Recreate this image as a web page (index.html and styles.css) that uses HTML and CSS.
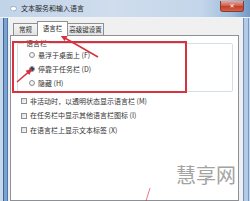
FILE: index.html
```html
<!DOCTYPE html>
<html lang="zh">
<head>
<meta charset="utf-8">
<link rel="stylesheet" href="styles.css">
</head>
<body>
<div class="window">
  <div class="titlebar">
    <svg class="app-icon" width="7" height="6" viewBox="0 0 7 6"><ellipse cx="3.5" cy="2.6" rx="3" ry="2.2" fill="#fff" stroke="#6f8fb5" stroke-width="0.6"/><path d="M2 4.4 L1.6 5.8 L3.4 4.6 Z" fill="#fff"/></svg>
    <span class="title">文本服务和输入语言</span>
    <div class="close">✕</div>
  </div>
  <div class="frame-body">
    <div class="frame-left"></div>
    <div class="client">
      <div class="tabs">
        <div class="tab tab-general">常规</div>
        <div class="tab tab-bar active">语言栏</div>
        <div class="tab tab-adv">高级键设置</div>
      </div>
      <div class="panel">
        <div class="group">
          <div class="legend">语言栏</div>
          <div class="row radio-row"><span class="radio"></span><span>悬浮于桌面上 (F)</span></div>
          <div class="row radio-row"><span class="radio checked"></span><span>停靠于任务栏 (D)</span></div>
          <div class="row radio-row"><span class="radio"></span><span>隐藏 (H)</span></div>
        </div>
        <div class="checks">
          <div class="row check-row"><span class="check"></span><span>非活动时，以透明状态显示语言栏 (M)</span></div>
          <div class="row check-row"><span class="check"></span><span>在任务栏中显示其他语言栏图标 (I)</span></div>
          <div class="row check-row"><span class="check"></span><span>在语言栏上显示文本标签 (X)</span></div>
        </div>
      </div>
    </div>
    <div class="frame-right"></div>
  </div>
  <div class="highlight"></div>
  <svg class="arrows" width="250" height="201" viewBox="0 0 250 201">
    <line x1="98" y1="57" x2="64" y2="37.5" stroke="#d8303c" stroke-width="1.5"/>
    <polygon points="60,35 67.6,36.1 64.6,41" fill="#d8303c"/>
    <line x1="17" y1="82" x2="29" y2="71.6" stroke="#d8303c" stroke-width="1.4"/>
    <polygon points="32.5,68.5 29.3,75 25.6,70.8" fill="#d8303c"/>
    <line x1="150" y1="188" x2="146" y2="201" stroke="#d8303c" stroke-width="0.9" opacity="0.7"/>
  </svg>
  <div class="watermark">慧享网</div>
</div>
</body>
</html>
```
FILE: styles.css
```css
* { box-sizing: border-box; }
html, body { margin: 0; padding: 0; }
body {
  width: 250px;
  height: 201px;
  overflow: hidden;
  font-family: "Noto Sans CJK SC", "Noto Sans", sans-serif;
  color: #333;
  background: #fff;
}
.window {
  position: relative;
  width: 250px;
  height: 201px;
  display: flex;
  flex-direction: column;
  overflow: hidden;
}
.titlebar {
  height: 18px;
  display: flex;
  align-items: center;
  padding-left: 10px;
  background: linear-gradient(to right, #c2d4e8 0%, #cfdded 45%, #c4d6ea 80%, #a3bfdd 92%, #7199c6 100%);
  border-bottom: 1px solid #eef3f9;
}
.app-icon { flex: none; margin-right: 4px; }
.title {
  font-size: 7px;
  line-height: 7px;
  color: #262626;
}
.close {
  margin-left: auto;
  margin-right: 6px;
  align-self: flex-start;
  margin-top: 1px;
  width: 24px;
  height: 11px;
  border: 1px solid #8a3b31;
  border-top: none;
  border-radius: 0 0 3px 3px;
  background: linear-gradient(#e9a797, #d0634f 45%, #c2402c 55%, #d2634c);
  color: #fff;
  font-size: 6px;
  line-height: 10px;
  text-align: center;
  font-family: "DejaVu Sans", sans-serif;
}
.frame-body {
  flex: 1;
  display: flex;
  min-height: 0;
}
.frame-left {
  width: 9px;
  flex: none;
  background: linear-gradient(to right, #c9d9ec 0 3px, #3f6797 3px 4px, #7ca2d0 4px 7px, #5079ab 7px 8px, #e6edf5 8px);
}
.frame-right {
  width: 7px;
  flex: none;
  background: linear-gradient(to right, #6f91bb 0 1px, #b5cbe5 1px 5px, #7598c4 5px 6px, #c5d6ea 6px);
}
.client {
  flex: 1;
  display: flex;
  flex-direction: column;
  background: #f0f0f0;
  min-width: 0;
}
.tabs {
  height: 17px;
  flex: none;
  display: flex;
  align-items: flex-end;
  padding-left: 4px;
}
.tab {
  height: 12px;
  border: 1px solid #8d9095;
  border-bottom: none;
  background: linear-gradient(#f6f6f6, #e2e2e2);
  font-size: 6.5px;
  line-height: 11px;
  text-align: center;
  color: #2a2a2a;
}
.tab-general { width: 25px; }
.tab-bar { width: 31px; margin: 0 -1px; }
.tab-adv { width: 37px; }
.tab.active {
  position: relative;
  z-index: 1;
  height: 15px;
  margin-bottom: -1px;
  background: #fff;
  line-height: 13px;
}
.panel {
  flex: 1;
  margin: 0 4px 0 1px;
  border: 1px solid #8d9095;
  background: #fff;
}
.group {
  margin: 7px 5px 0 6px;
  border: 1px solid #d5dfe5;
  border-radius: 2px;
  padding: 0 0 1px 6px;
}
.legend {
  width: fit-content;
  margin-top: -4px;
  padding: 0 2px;
  background: #fff;
  font-size: 7px;
  line-height: 7px;
  margin-bottom: 1px;
}
.row {
  display: flex;
  align-items: center;
  font-size: 7px;
  line-height: 7px;
  white-space: nowrap;
}
.radio-row { height: 14px; padding-left: 5px; gap: 3px; }
.radio {
  width: 6px;
  height: 6px;
  border-radius: 50%;
  border: 1px solid #8e8f8f;
  background: radial-gradient(circle at 40% 40%, #fff, #dcdcdc);
  flex: none;
}
.radio.checked {
  background: radial-gradient(circle, #23405f 0 1.6px, #b9c6d3 2px, #eef0f2 3px);
}
.checks { margin-top: 2px; }
.check-row { height: 14.5px; padding-left: 10px; gap: 3px; }
.check {
  width: 6px;
  height: 6px;
  border: 1px solid #8e8f8f;
  background: linear-gradient(135deg, #dcdcdc, #fbfbfb);
  flex: none;
}
.highlight {
  position: absolute;
  left: 12px;
  top: 41px;
  width: 175px;
  height: 52px;
  border: 2px solid #d8333d;
  pointer-events: none;
}
.arrows {
  position: absolute;
  left: 0;
  top: 0;
  pointer-events: none;
}
.watermark {
  position: absolute;
  left: 176px;
  top: 165px;
  font-size: 20px;
  line-height: 20px;
  color: #a3a3a3;
  font-family: "Noto Sans CJK SC", sans-serif;
}
```
